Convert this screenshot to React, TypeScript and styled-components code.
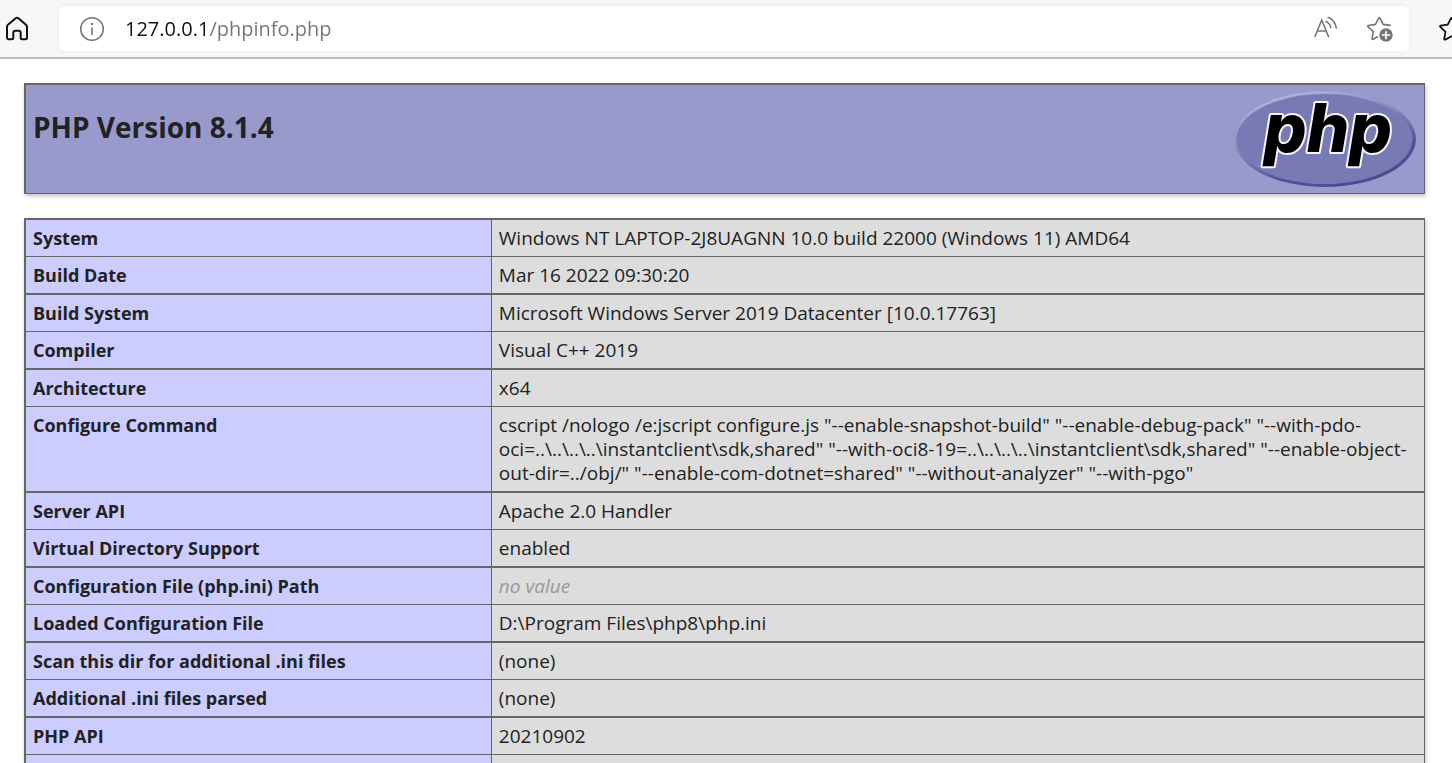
import React from "react";
import styled, { createGlobalStyle, css } from "styled-components";

const GlobalStyle = createGlobalStyle`
  * { box-sizing: border-box; }
  body {
    margin: 0;
    background: #fff;
    color: #222;
    font-family: "Open Sans", "Segoe UI", sans-serif;
  }
`;

const Window = styled.div`
  height: 100vh;
  overflow: hidden;
`;

const Toolbar = styled.header`
  display: flex;
  align-items: center;
  height: 59px;
  padding-left: 5px;
  background: #f7f7f7;
  border-bottom: 2px solid #bdbdbd;
  overflow: hidden;
`;

const IconButton = styled.button`
  display: flex;
  flex: none;
  padding: 0;
  border: 0;
  background: none;
  color: inherit;
`;

const EdgeButton = styled(IconButton)`
  margin-right: -13px;
`;

const AddressBar = styled.div`
  display: flex;
  flex: 1;
  align-items: center;
  height: 45px;
  margin: 0 29px 0 30px;
  padding: 0 16px 0 20px;
  border-radius: 6px;
  background: #fff;
  box-shadow: 0 0 6px rgba(0, 0, 0, 0.06);
  color: #757575;
`;

const AddressInput = styled.input`
  flex: 1;
  min-width: 0;
  height: 40px;
  margin-left: 20px;
  padding: 0;
  border: 0;
  outline: 0;
  font-family: inherit;
  font-size: 20px;
  line-height: 40px;
  background: linear-gradient(to right, #111 83px, #757575 83px);
  -webkit-background-clip: text;
  background-clip: text;
  color: #757575;
  -webkit-text-fill-color: transparent;
`;

const AddressActions = styled.div`
  display: flex;
  gap: 28px;
`;

const Page = styled.main`
  display: flex;
  flex-direction: column;
  gap: 24px;
  padding: 24px 27px 0 24px;
`;

const panel = css`
  border: 1px solid #666;
  border-left-width: 2px;
  box-shadow: 1px 2px 4px rgba(0, 0, 0, 0.25);
`;

const Banner = styled.section`
  ${panel}
  display: flex;
  align-items: flex-start;
  justify-content: space-between;
  height: 111px;
  padding: 6px 8px 0 7px;
  border-top-width: 2px;
  background: #9999cc;
`;

const Title = styled.h1`
  margin: 17px 0 0;
  font-size: 28px;
  line-height: 38px;
  font-weight: 700;
`;

const InfoTable = styled.table`
  ${panel}
  width: 100%;
  border-top: 0;
  border-spacing: 0;
  table-layout: fixed;
  line-height: 24px;
`;

const Row = styled.tr`
  & > * {
    padding: 6px 7px;
    border-top: 1px solid #666;
    text-align: left;
    vertical-align: top;
  }
  &:nth-child(odd) > * {
    border-top-width: 2px;
  }
`;

const Name = styled.th`
  width: 33.25%;
  background: #ccccff;
  font-size: 18px;
  font-weight: 700;
`;

const Value = styled.td`
  border-left: 1px solid #666;
  background: #ddd;
  font-size: 19px;
  overflow-wrap: break-word;
`;

const NoValue = styled.i`
  color: #999;
`;

const HomeIcon = () => (
  <svg width="24" height="26" viewBox="0 0 24 26" fill="none" stroke="#111" strokeWidth="2" strokeLinejoin="round" aria-hidden="true">
    <path d="M2 10.900c0-.9.3-1.500 1-2.100l7.600-6.500c.8-.7 2-.7 2.800 0L21 8.800c.7.6 1 1.200 1 2.100V21.500c0 1-.7 1.700-1.700 1.700h-3.100c-.9 0-1.500-.6-1.500-1.500v-5c0-1.200-.8-2-2-2h-3.400c-1.200 0-2 .8-2 2v5c0 .9-.6 1.500-1.500 1.500H3.700c-1 0-1.700-.7-1.700-1.700z" />
  </svg>
);

const InfoIcon = () => (
  <svg width="26" height="26" viewBox="0 0 26 26" fill="none" stroke="currentColor" aria-hidden="true">
    <circle cx="13" cy="13" r="11.300" strokeWidth="1.500" />
    <path d="M13 11.500v7.500" strokeWidth="1.600" />
    <circle cx="13" cy="8" r="1.200" fill="currentColor" stroke="none" />
  </svg>
);

const ReadAloudIcon = () => (
  <svg width="25" height="26" viewBox="0 0 25 26" fill="none" stroke="currentColor" strokeWidth="1.600" strokeLinecap="round" aria-hidden="true">
    <path d="M2 21.500 8.700 5 15.500 21.500M4.300 16h8.800" />
    <path d="M13 6.500q4.200 1.800 4.700 6M15.300 2.500q6.800 2.800 8 10.500" />
  </svg>
);

const FavoriteAddIcon = () => (
  <svg width="27" height="28" viewBox="0 0 27 28" fill="none" stroke="currentColor" strokeWidth="1.600" strokeLinejoin="round" strokeLinecap="round" aria-hidden="true">
    <path d="M11.500 21.800 7.200 24.300c-.6.3-1.200 0-1.100-.8l1.200-6.800L1.900 11.700c-.5-.5-.3-1.100.4-1.200l7.200-1.100 3.200-6.300c.3-.6.9-.6 1.200 0l3.200 6.300 6.900 1" />
    <circle cx="20" cy="20" r="6.700" fill="currentColor" stroke="none" />
    <path d="M20 16.500v7M16.500 20h7" stroke="#fff" strokeWidth="1.700" />
  </svg>
);

const FavoritesIcon = () => (
  <svg width="27" height="26" viewBox="0 0 27 26" fill="none" stroke="#111" strokeWidth="1.800" strokeLinejoin="round" aria-hidden="true">
    <path d="M12.900 2.300c.3-.6.900-.6 1.200 0l3.200 6.400 6.900 1c.7.1 1 .7.500 1.200L19.500 15.900l1.300 6.900c.1.700-.5 1.100-1.100.8L13.500 20.300 7.300 23.600c-.6.300-1.200-.1-1.100-.8L7.500 15.900 2.300 10.900c-.5-.5-.2-1.100.5-1.200l6.900-1z" />
  </svg>
);

const LogoSvg = styled.svg`
  flex: none;
  overflow: visible;
`;

const PhpLogo = () => (
  <LogoSvg width="182" height="97" viewBox="0 0 182 97" role="img" aria-label="PHP logo">
    <defs>
      <linearGradient id="rim" x1="0.250" y1="0" x2="0.750" y2="1">
        <stop offset="0" stopColor="#b4b5df" />
        <stop offset="0.300" stopColor="#9394c8" />
        <stop offset="0.500" stopColor="#7679b1" />
        <stop offset="0.750" stopColor="#4e509a" />
        <stop offset="1" stopColor="#484a90" />
      </linearGradient>
    </defs>
    <ellipse cx="91" cy="48" rx="91" ry="48" fill="url(#rim)" />
    <ellipse cx="90.500" cy="48" rx="88" ry="45" fill="#777ab3" />
    <text
      x="30"
      y="61"
      fontFamily="Inter, sans-serif"
      fontSize="67"
      fontWeight="800"
      fontStyle="italic"
      fill="#000"
      stroke="#f4f4f8"
      strokeWidth="4"
      strokeLinejoin="round"
      paintOrder="stroke"
    >
      php
    </text>
  </LogoSvg>
);

const rows: [string, React.ReactNode][] = [
  ["System", "Windows NT LAPTOP-2J8UAGNN 10.0 build 22000 (Windows 11) AMD64"],
  ["Build Date", "Mar 16 2022 09:30:20"],
  ["Build System", "Microsoft Windows Server 2019 Datacenter [10.0.17763]"],
  ["Compiler", "Visual C++ 2019"],
  ["Architecture", "x64"],
  [
    "Configure Command",
    'cscript /nologo /e:jscript configure.js "--enable-snapshot-build" "--enable-debug-pack" "--with-pdo-oci=..\\..\\..\\..\\instantclient\\sdk,shared" "--with-oci8-19=..\\..\\..\\..\\instantclient\\sdk,shared" "--enable-object-out-dir=../obj/" "--enable-com-dotnet=shared" "--without-analyzer" "--with-pgo"',
  ],
  ["Server API", "Apache 2.0 Handler"],
  ["Virtual Directory Support", "enabled"],
  ["Configuration File (php.ini) Path", <NoValue key="none">no value</NoValue>],
  ["Loaded Configuration File", "D:\\Program Files\\php8\\php.ini"],
  ["Scan this dir for additional .ini files", "(none)"],
  ["Additional .ini files parsed", "(none)"],
  ["PHP API", "20210902"],
  ["", ""],
];

export default function App() {
  return (
    <Window>
      <GlobalStyle />
      <Toolbar>
        <IconButton type="button" aria-label="Home"><HomeIcon /></IconButton>
        <AddressBar>
          <IconButton type="button" aria-label="Site information"><InfoIcon /></IconButton>
          <AddressInput aria-label="Address" defaultValue="127.0.0.1/phpinfo.php" spellCheck={false} />
          <AddressActions>
            <IconButton type="button" aria-label="Read aloud"><ReadAloudIcon /></IconButton>
            <IconButton type="button" aria-label="Add to favorites"><FavoriteAddIcon /></IconButton>
          </AddressActions>
        </AddressBar>
        <EdgeButton type="button" aria-label="Favorites"><FavoritesIcon /></EdgeButton>
      </Toolbar>
      <Page>
        <Banner>
          <Title>PHP Version 8.1.4</Title>
          <PhpLogo />
        </Banner>
        <InfoTable>
          <tbody>
            {rows.map(([name, value]) => (
              <Row key={name}>
                <Name scope="row">{name}</Name>
                <Value>{value}</Value>
              </Row>
            ))}
          </tbody>
        </InfoTable>
      </Page>
    </Window>
  );
}
